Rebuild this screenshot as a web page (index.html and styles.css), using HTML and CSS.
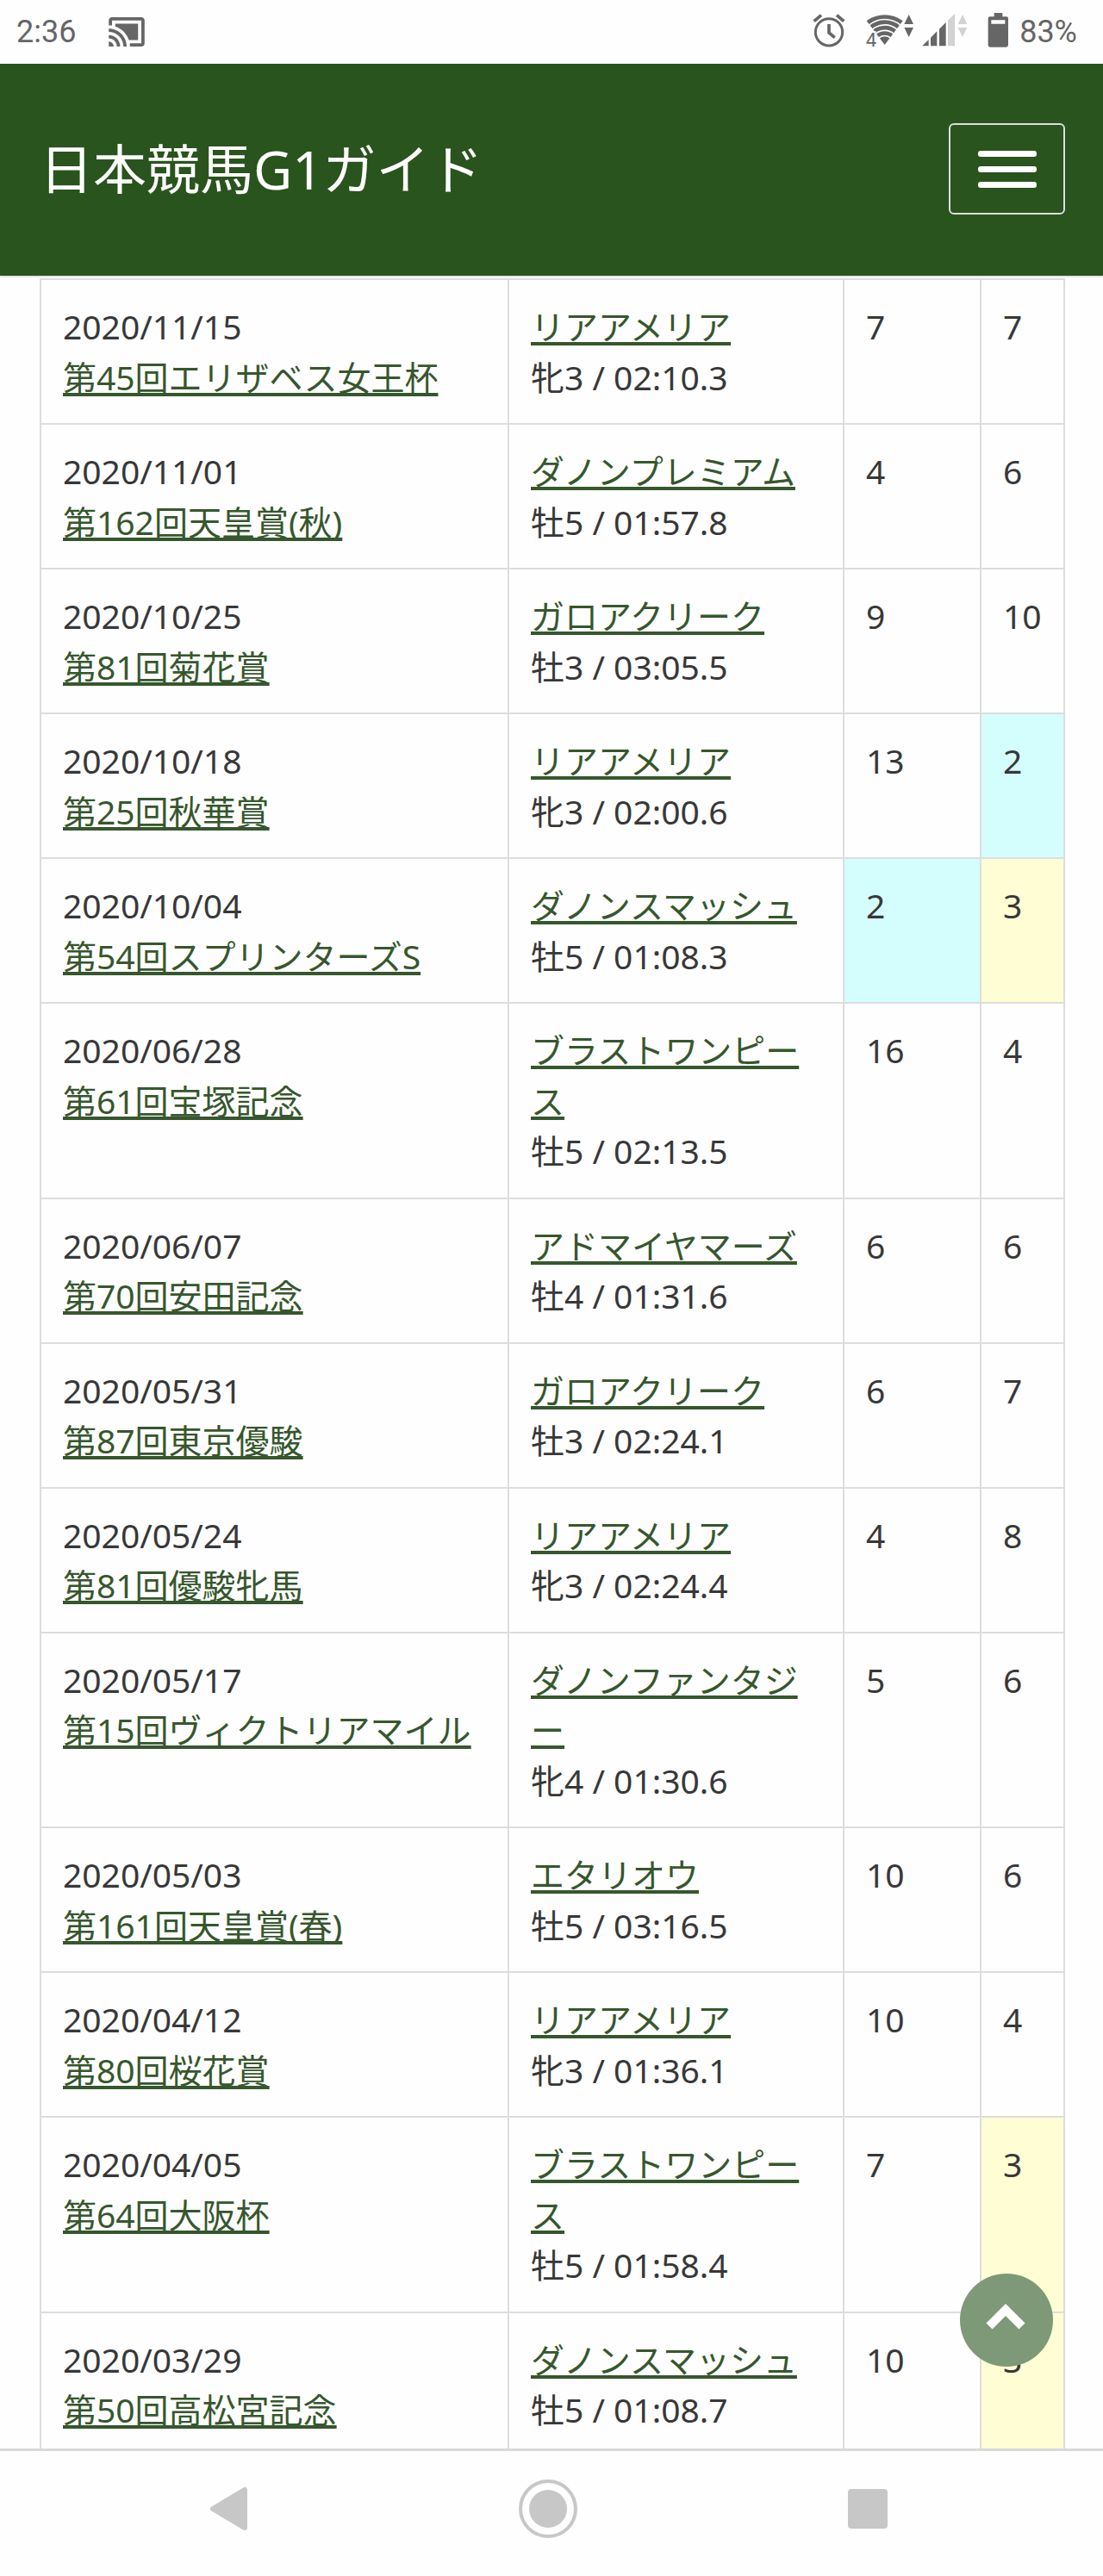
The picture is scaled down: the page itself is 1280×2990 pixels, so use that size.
FILE: index.html
```html
<!doctype html>
<html lang="ja">
<head>
	<meta charset="utf-8">
	<title>日本競馬G1ガイド</title>
	<meta name="viewport" content="width=device-width">
	<link rel="stylesheet" href="styles.css">
</head>
<body>
	<div class="status-bar">
		<div class="status-group">
			<span class="clock">2:36</span>
			<svg class="icon-cast" viewBox="1 3 22 18"><path d="M1 18v3h3c0-1.66-1.34-3-3-3zm0-4v2c2.76 0 5 2.24 5 5h2c0-3.87-3.13-7-7-7zm18-7H5v1.63c3.96 1.28 7.09 4.41 8.37 8.37H19V7zM1 10v2c4.97 0 9 4.03 9 9h2c0-6.08-4.93-11-11-11zm20-7H3c-1.1 0-2 .9-2 2v3h2V5h18v14h-7v2h7c1.1 0 2-.9 2-2V5c0-1.1-.9-2-2-2z"></path></svg>
		</div>
		<div class="status-group">
			<svg class="icon-alarm" viewBox="188 45 114 132">
				<circle cx="245" cy="112" r="47" fill="none" stroke="#666" stroke-width="9"></circle>
				<path d="M245 84V114L265 131M193 74L218 53M297 74L272 53" fill="none" stroke="#666" stroke-width="11"></path>
			</svg>
			<div class="status-network">
				<svg class="icon-wifi" viewBox="370 45 171 132">
					<path d="M438 156L375 73A104 104 0 0 1 501 73Z"></path>
					<g fill="none" stroke="#fefefe" stroke-width="5">
						<path d="M382 88A87 87 0 0 1 494 88"></path>
						<path d="M394 103A68 68 0 0 1 482 103"></path>
						<path d="M406 118A49 49 0 0 1 470 118"></path>
						<path d="M416 134A30 30 0 0 1 460 134"></path>
					</g>
					<path d="M522 51L538 84H506ZM522 129L538 96H506Z"></path>
					<text x="372" y="163">4</text>
				</svg>
				<svg class="icon-signal" viewBox="567 45 159 132">
					<path d="M568 160L590 138V160ZM597 131L619 109V160H597ZM627 101L650 78V160H627Z"></path>
					<path fill="#d2d2d2" d="M657 71L681 47V160H657ZM708 51L724 84H692ZM708 129L724 96H692Z"></path>
				</svg>
			</div>
			<div class="status-battery">
				<svg class="icon-battery" viewBox="795 45 75 132">
					<path fill-rule="evenodd" d="M818 45H847V58H861Q867 58 867 64V157Q867 164 860 164H804Q797 164 797 157V64Q797 58 803 58H818ZM808 70V83H856V70Z"></path>
				</svg>
				<span>83%</span>
			</div>
		</div>
	</div>
	<header class="site-header">
		<h1>日本競馬G1ガイド</h1>
		<button class="menu-button" type="button" aria-label="メニュー"><span></span><span></span><span></span></button>
	</header>
	<main>
		<table class="results">
			<colgroup>
				<col class="col-race">
				<col class="col-horse">
				<col class="col-popularity">
				<col class="col-rank">
			</colgroup>
			<tbody>
				<tr>
					<td>2020/11/15<br><a href="#">第45回エリザベス女王杯</a></td>
					<td><a href="#">リアアメリア</a><br>牝3 / 02:10.3</td>
					<td>7</td>
					<td>7</td>
				</tr>
				<tr>
					<td>2020/11/01<br><a href="#">第162回天皇賞(秋)</a></td>
					<td><a href="#">ダノンプレミアム</a><br>牡5 / 01:57.8</td>
					<td>4</td>
					<td>6</td>
				</tr>
				<tr>
					<td>2020/10/25<br><a href="#">第81回菊花賞</a></td>
					<td><a href="#">ガロアクリーク</a><br>牡3 / 03:05.5</td>
					<td>9</td>
					<td>10</td>
				</tr>
				<tr>
					<td>2020/10/18<br><a href="#">第25回秋華賞</a></td>
					<td><a href="#">リアアメリア</a><br>牝3 / 02:00.6</td>
					<td>13</td>
					<td class="second">2</td>
				</tr>
				<tr>
					<td>2020/10/04<br><a href="#">第54回スプリンターズS</a></td>
					<td><a href="#">ダノンスマッシュ</a><br>牡5 / 01:08.3</td>
					<td class="second">2</td>
					<td class="third">3</td>
				</tr>
				<tr>
					<td>2020/06/28<br><a href="#">第61回宝塚記念</a></td>
					<td><a href="#">ブラストワンピース</a><br>牡5 / 02:13.5</td>
					<td>16</td>
					<td>4</td>
				</tr>
				<tr>
					<td>2020/06/07<br><a href="#">第70回安田記念</a></td>
					<td><a href="#">アドマイヤマーズ</a><br>牡4 / 01:31.6</td>
					<td>6</td>
					<td>6</td>
				</tr>
				<tr>
					<td>2020/05/31<br><a href="#">第87回東京優駿</a></td>
					<td><a href="#">ガロアクリーク</a><br>牡3 / 02:24.1</td>
					<td>6</td>
					<td>7</td>
				</tr>
				<tr>
					<td>2020/05/24<br><a href="#">第81回優駿牝馬</a></td>
					<td><a href="#">リアアメリア</a><br>牝3 / 02:24.4</td>
					<td>4</td>
					<td>8</td>
				</tr>
				<tr>
					<td>2020/05/17<br><a href="#">第15回ヴィクトリアマイル</a></td>
					<td><a href="#">ダノンファンタジー</a><br>牝4 / 01:30.6</td>
					<td>5</td>
					<td>6</td>
				</tr>
				<tr>
					<td>2020/05/03<br><a href="#">第161回天皇賞(春)</a></td>
					<td><a href="#">エタリオウ</a><br>牡5 / 03:16.5</td>
					<td>10</td>
					<td>6</td>
				</tr>
				<tr>
					<td>2020/04/12<br><a href="#">第80回桜花賞</a></td>
					<td><a href="#">リアアメリア</a><br>牝3 / 01:36.1</td>
					<td>10</td>
					<td>4</td>
				</tr>
				<tr>
					<td>2020/04/05<br><a href="#">第64回大阪杯</a></td>
					<td><a href="#">ブラストワンピース</a><br>牡5 / 01:58.4</td>
					<td>7</td>
					<td class="third">3</td>
				</tr>
				<tr>
					<td>2020/03/29<br><a href="#">第50回高松宮記念</a></td>
					<td><a href="#">ダノンスマッシュ</a><br>牡5 / 01:08.7</td>
					<td>10</td>
					<td class="third">3</td>
				</tr>
			</tbody>
		</table>
	</main>
	<button class="page-top" type="button" aria-label="ページトップへ">
		<svg viewBox="0 0 108 108"><path d="M34 61L53 42L72 61" fill="none" stroke="#fff" stroke-width="10"></path></svg>
	</button>
	<nav class="nav-bar">
		<button type="button" aria-label="戻る"><svg viewBox="0 0 68 68"><path d="M16 34L53 12V56Z" stroke="#c7c7c7" stroke-width="6" stroke-linejoin="round"></path></svg></button>
		<button type="button" aria-label="ホーム"><svg viewBox="0 0 68 68"><circle cx="34" cy="34" r="32" fill="none" stroke="#c7c7c7" stroke-width="4"></circle><circle cx="34" cy="34" r="22"></circle></svg></button>
		<button type="button" aria-label="アプリ一覧"><svg viewBox="0 0 68 68"><rect x="11" y="11" width="46" height="46" rx="4"></rect></svg></button>
	</nav>
</body>
</html>
```
FILE: styles.css
```css
* {
	box-sizing: border-box;
}
html, body {
	height: 100%;
	margin: 0;
	padding: 0;
}
body {
	position: relative;
	display: flex;
	flex-direction: column;
	overflow: hidden;
	background-color: #fefefe;
	color: #383838;
	font-family: "Noto Sans", "Noto Sans CJK JP", sans-serif;
	font-size: 39px;
	line-height: 1.5;
}
button {
	padding: 0;
	border: 0;
	background: none;
}
svg {
	display: block;
}

/* status bar */
.status-bar {
	flex: none;
	display: flex;
	justify-content: space-between;
	align-items: center;
	height: 74px;
	padding: 0 30px 0 19px;
	color: #666;
	fill: #666;
	font-family: Roboto, sans-serif;
	font-size: 36px;
	line-height: 42px;
}
.status-group {
	display: flex;
	align-items: center;
	gap: 23px;
}
.status-group:first-child {
	gap: 38px;
}
.status-network {
	display: flex;
	gap: 9px;
}
.status-battery {
	display: flex;
	align-items: center;
	gap: 12px;
}
.icon-cast {
	width: 42px;
	height: 34px;
}
.icon-alarm {
	width: 38px;
	height: 44px;
}
.icon-wifi {
	width: 57px;
	height: 44px;
}
.icon-wifi text {
	font-size: 66px;
	stroke: #fefefe;
	stroke-width: 10px;
	paint-order: stroke;
}
.icon-signal {
	width: 53px;
	height: 44px;
}
.icon-battery {
	width: 25px;
	height: 44px;
}

/* header */
.site-header {
	flex: none;
	display: flex;
	justify-content: space-between;
	align-items: center;
	height: 246px;
	padding: 0 44px 2px 46px;
	background-color: #29541d;
	box-shadow: 0 1px 2px rgba(0, 0, 0, .2);
}
.site-header h1 {
	margin: 0;
	color: #fff;
	font-size: 62px;
	font-weight: 400;
}
.menu-button {
	display: flex;
	flex-direction: column;
	justify-content: center;
	align-items: center;
	gap: 11px;
	width: 135px;
	height: 106px;
	border: 2px solid #ddd;
	border-radius: 6px;
}
.menu-button span {
	width: 68px;
	height: 7px;
	border-radius: 3px;
	background-color: #fff;
}

/* results */
main {
	flex: 1;
	min-height: 0;
	padding: 3px 44px 0 46px;
	overflow: hidden;
}
.results {
	width: 100%;
	table-layout: fixed;
	border-collapse: collapse;
}
.col-race {
	width: 543px;
}
.col-popularity {
	width: 159px;
}
.col-rank {
	width: 97px;
}
.results td {
	padding: 25px 24px 24px 25px;
	border: 2px solid #ddd;
	vertical-align: top;
}
.results a {
	color: #36572d;
	text-decoration: underline;
	text-decoration-thickness: 4px;
	text-decoration-skip-ink: none;
	text-underline-offset: 3px;
}
.second {
	background-color: #d4fdfd;
}
.third {
	background-color: #fefdd3;
}

/* back to top */
.page-top {
	position: absolute;
	right: 58px;
	bottom: 243px;
	width: 108px;
	height: 108px;
	border-radius: 50%;
	background-color: #7e9978;
}

/* navigation bar */
.nav-bar {
	flex: none;
	display: flex;
	justify-content: space-between;
	align-items: center;
	height: 148px;
	padding: 0 239px 12px 231px;
	border-top: 3px solid #d8d8d8;
	fill: #c7c7c7;
}
.nav-bar button {
	width: 68px;
	height: 68px;
}
```
